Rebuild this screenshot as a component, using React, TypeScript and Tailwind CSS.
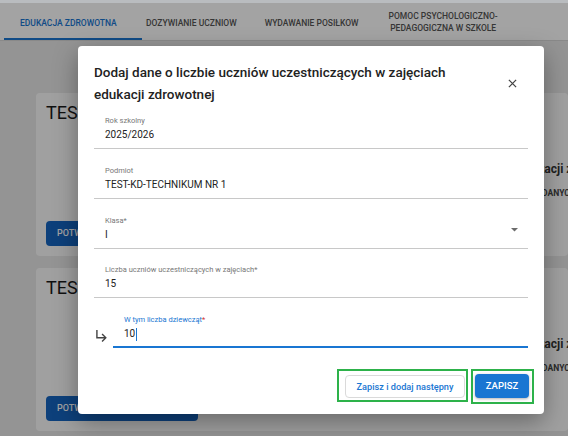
import React from "react";

function Field({
  label,
  value,
  mt = true,
  dropdown = false,
}: {
  label: string;
  value: string;
  mt?: boolean;
  dropdown?: boolean;
}) {
  return (
    <div className={`${mt ? "mt-[16.75px]" : ""} flex flex-col border-b border-[#c8c8c8] pb-[6px] pl-[11px]`}>
      <div className="text-[7.5px] leading-[10px] text-[#777]">{label}</div>
      <div className="mt-[2px] flex items-center justify-between">
        <span className="text-[10px] leading-[14px] text-[#222]">{value}</span>
        {dropdown && (
          <svg viewBox="7 10 10 5" className="mb-[9px] mr-[10px] h-[3.5px] w-[7px] fill-[#6b6b6b]">
            <path d="M7 10l5 5 5-5z" />
          </svg>
        )}
      </div>
    </div>
  );
}

function Card() {
  return (
    <div className="flex h-[163px] rounded-[4px] bg-[#fbfbfb]">
      <div className="flex w-[482px] shrink-0 flex-col pb-[10px] pl-[10px] pt-[9px]">
        <div className="text-[18px] leading-[22px] text-[#1a1a1a]">TEST-KD-TECHNIKUM NR 1</div>
        <div className="flex-1" />
        <div className="flex h-[25px] w-[152px] items-center rounded-[4px] bg-[#1565c0] pl-[11px] text-[9px] font-medium text-white">
          POTWIERDŹ DANE
        </div>
      </div>
      <div className="flex shrink-0 flex-col whitespace-nowrap pt-[68px]">
        <div className="text-[12px] font-bold leading-[16px] text-[#333]">edukacji zdrowotnej</div>
        <div className="mt-[10px] text-[8.5px] font-bold leading-[12px] text-[#444]">BRAK DANYCH</div>
      </div>
    </div>
  );
}

export default function App() {
  return (
    <div className="relative h-[436px] w-[568px] overflow-hidden font-['Roboto',sans-serif]">
      <div className="h-[3px] bg-[#b9bcbf]" />
      <div className="flex h-[38px] items-stretch border-b border-[#d6d6d6] bg-white pl-[4px] text-[8.5px] font-medium">
        <div className="flex w-[138px] items-center border-b-2 border-[#1976d2] pl-[16px] pt-[6px] text-[#1976d2]">
          EDUKACJA ZDROWOTNA
        </div>
        <div className="ml-[4px] flex items-center pt-[4px] text-[#555]">DOZYWIANIE UCZNIOW</div>
        <div className="ml-[28px] flex items-center pt-[4px] text-[#555]">WYDAWANIE POSIŁKOW</div>
        <div className="ml-[30px] flex flex-col items-center justify-center pt-[2px] text-center leading-[11.5px] text-[#555]">
          <span>POMOC PSYCHOLOGICZNO-</span>
          <span>PEDAGOGICZNA W SZKOLE</span>
        </div>
      </div>
      <div className="flex h-[395px] flex-col gap-[12px] bg-[#e8e8e8] pl-[36px] pt-[52px]">
        <Card />
        <Card />
      </div>

      <div className="absolute inset-x-0 bottom-0 top-[3px] bg-black/[0.36]" />

      <div className="absolute left-[78px] top-[46px] flex h-[368px] w-[466px] flex-col rounded-[4px] bg-white pl-[16px] pr-[16px] pt-[15px] shadow-[0_8px_24px_rgba(0,0,0,0.35)]">
        <div className="flex items-center justify-between">
          <div className="w-[380px] text-[13.5px] font-medium leading-[22px] text-[#222]">
            Dodaj dane o liczbie uczniów uczestniczących w zajęciach edukacji zdrowotnej
          </div>
          <svg viewBox="0 0 10 10" className="mr-[11px] h-[9px] w-[9px] stroke-[#444]" strokeWidth="1.4">
            <path d="M1 1L9 9M9 1L1 9" />
          </svg>
        </div>

        <div className="mt-[11px]">
          <Field label="Rok szkolny" value="2025/2026" mt={false} />
          <Field label="Podmiot" value="TEST-KD-TECHNIKUM NR 1" />
          <Field label="Klasa*" value="I" dropdown />
          <Field label="Liczba uczniów uczestniczących w zajęciach*" value="15" />
          <div className="mt-[16.75px] flex items-end">
            <div className="flex w-[19px] items-end pb-[6px] pl-[2px]">
              <svg viewBox="4 4 15 17" className="h-[12px] w-[11px] fill-[#444]">
                <path d="M19 15l-6 6-1.42-1.42L15.17 16H4V4h2v10h9.17l-3.59-3.58L13 9l6 6z" />
              </svg>
            </div>
            <div className="flex flex-1 flex-col border-b-2 border-[#1976d2] pb-[5px] pl-[11px]">
              <div className="text-[7.5px] leading-[10px] text-[#1976d2]">
                W tym liczba dziewcząt<span className="text-[#d32f2f]">*</span>
              </div>
              <div className="mt-[2px] flex items-center text-[10px] leading-[14px] text-[#222]">
                10<span className="ml-[0.5px] h-[13px] w-[1px] bg-[#1976d2]" />
              </div>
            </div>
          </div>
        </div>

        <div className="-mr-[6px] mt-[21px] flex justify-end gap-[3px]">
          <div className="flex h-[33px] w-[131px] items-start justify-end border-2 border-[#2db24a] pr-[1px] pt-[4px]">
            <div className="flex h-[23px] w-[120px] items-center justify-center rounded-[4px] border border-[#dadada] text-[9.2px] font-medium text-[#1976d2]">
              Zapisz i dodaj następny
            </div>
          </div>
          <div className="flex h-[35px] w-[63px] items-start border-2 border-[#2db24a] pl-[2px] pt-[3px]">
            <div className="flex h-[24px] w-[54px] items-center justify-center rounded-[4px] bg-[#1976d2] text-[9.5px] font-medium text-white shadow-[0_1px_3px_rgba(0,0,0,0.3)]">
              ZAPISZ
            </div>
          </div>
        </div>
      </div>
    </div>
  );
}
